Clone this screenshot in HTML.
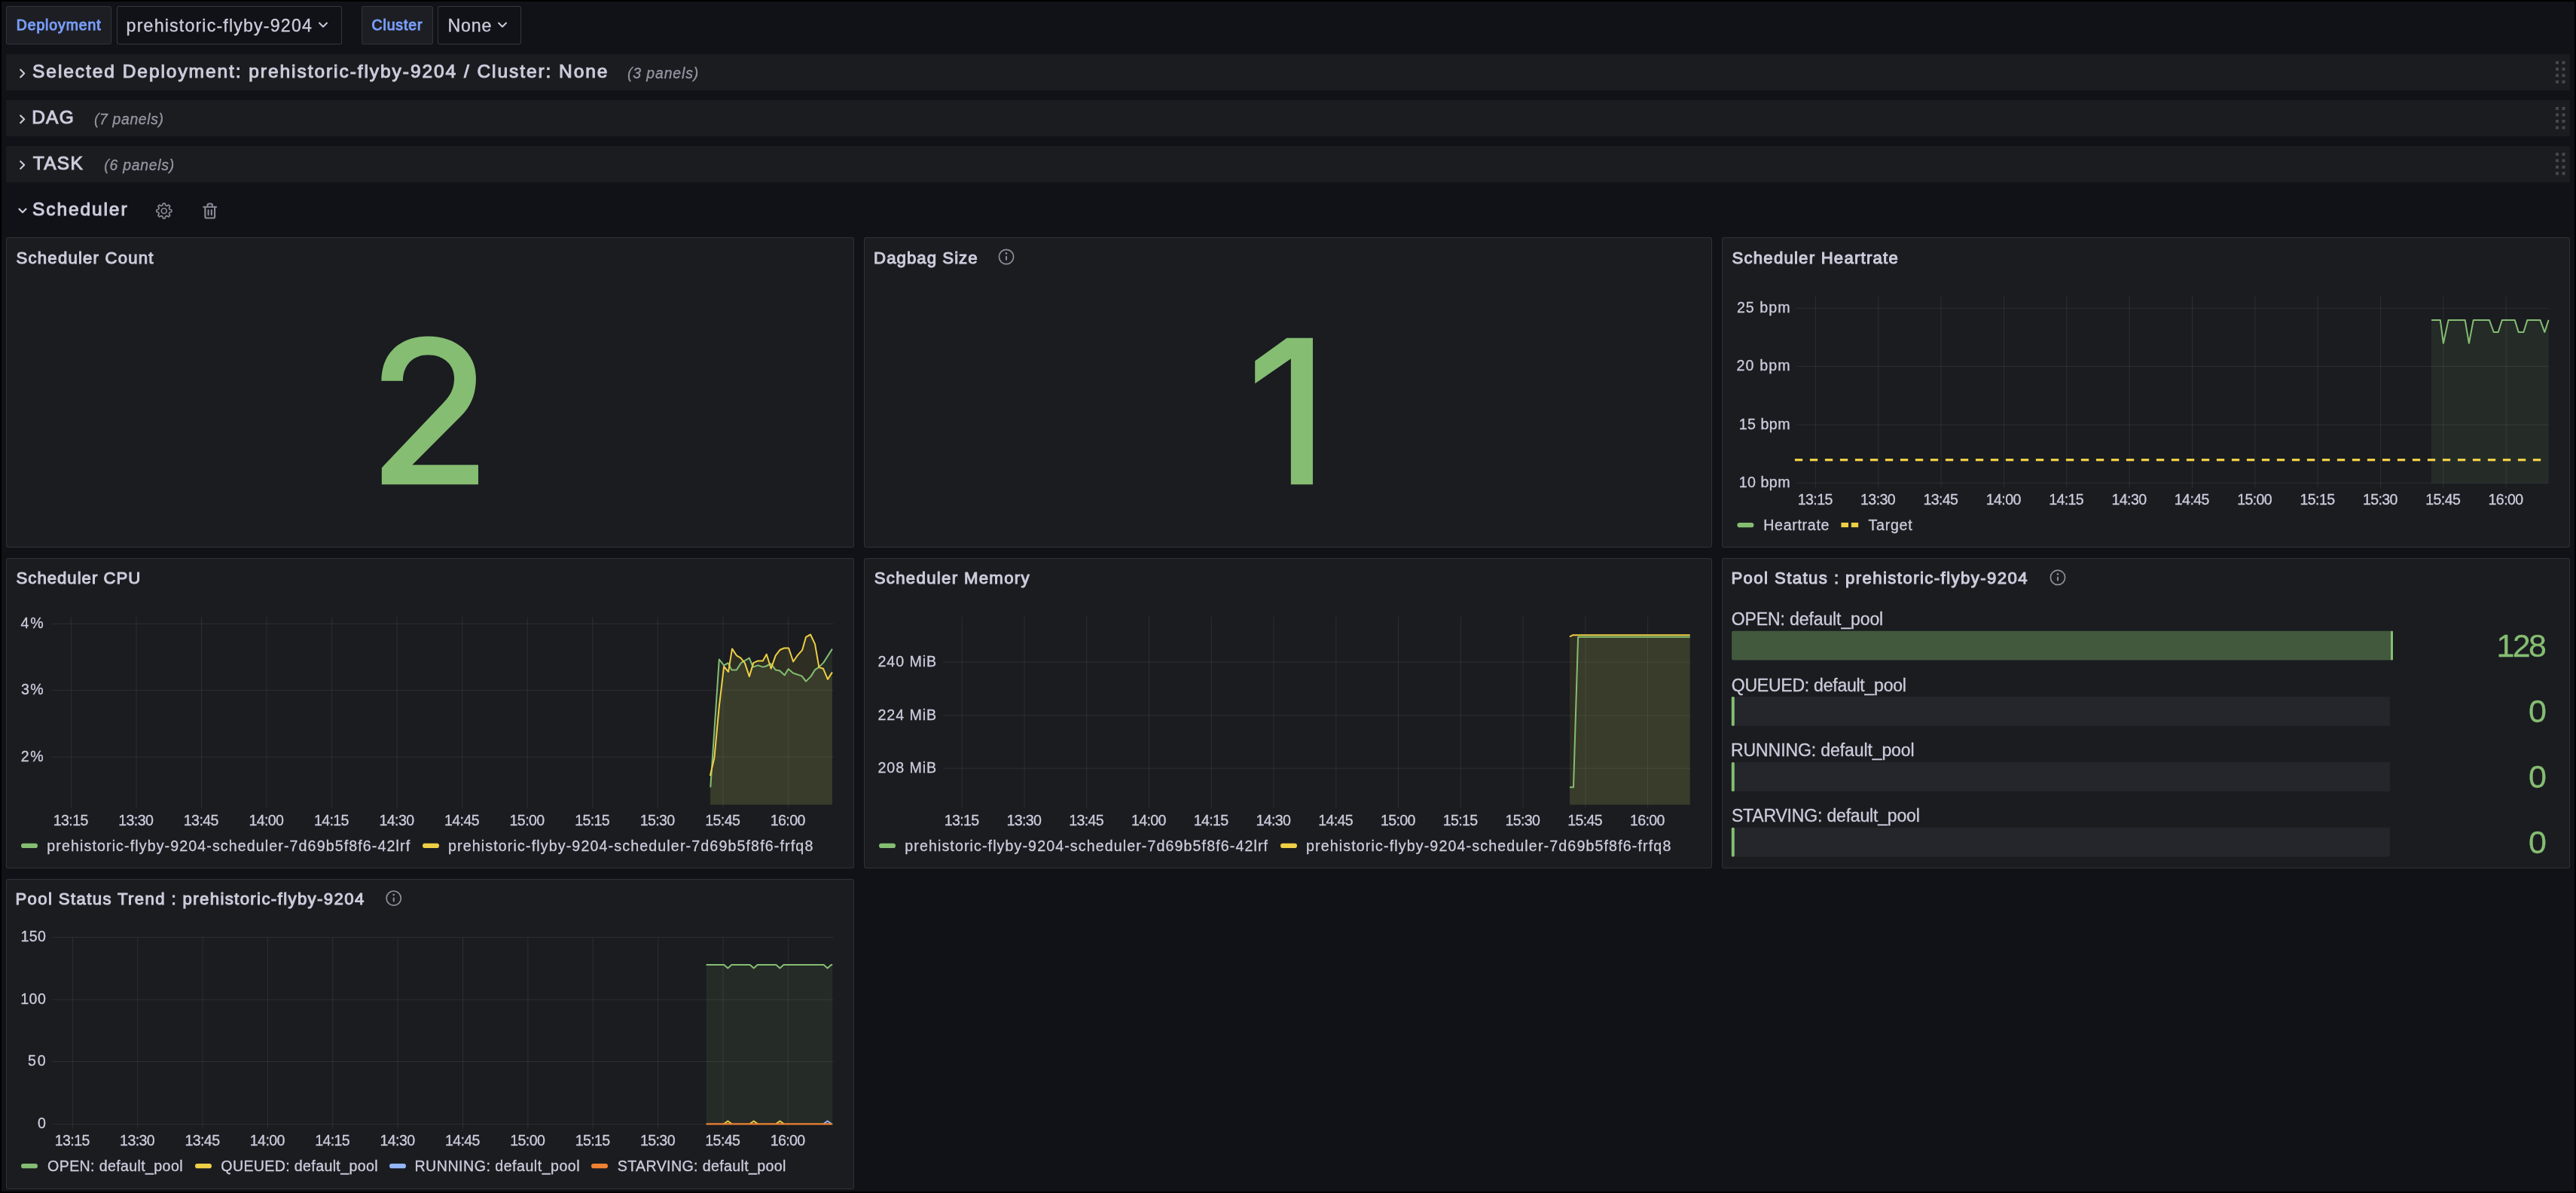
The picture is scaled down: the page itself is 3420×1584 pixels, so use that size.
<!DOCTYPE html>
<html><head><meta charset="utf-8"><title>Scheduler</title>
<style>
html,body{margin:0;padding:0;width:3420px;height:1584px;overflow:hidden;background:#000;}
body{position:relative;font-family:"Liberation Sans",sans-serif;}
.a{position:absolute;}
.t{position:absolute;white-space:pre;}
svg.g{position:absolute;left:0;top:0;}
.tl{position:absolute;left:0;top:0;width:3420px;height:1584px;will-change:transform;}
</style></head><body>
<div class="a" style="left:0.00px;top:0.00px;width:3420.00px;height:1584.00px;background:#000;"></div>
<div class="a" style="left:2.00px;top:2.00px;width:3416.00px;height:1580.00px;background:#111217;"></div>
<div class="a" style="left:8.00px;top:8.00px;width:140.00px;height:51.00px;background:#1d1e23;box-sizing:border-box;border:1px solid rgba(204,204,220,0.12);border-radius:3px;"></div>
<div class="a" style="left:155.00px;top:8.00px;width:299.00px;height:51.00px;background:#111217;box-sizing:border-box;border:1px solid rgba(204,204,220,0.20);border-radius:3px;"></div>
<div class="a" style="left:480.00px;top:8.00px;width:95.00px;height:51.00px;background:#1d1e23;box-sizing:border-box;border:1px solid rgba(204,204,220,0.12);border-radius:3px;"></div>
<div class="a" style="left:581.00px;top:8.00px;width:111.00px;height:51.00px;background:#111217;box-sizing:border-box;border:1px solid rgba(204,204,220,0.20);border-radius:3px;"></div>
<div class="a" style="left:8.00px;top:72.00px;width:3404.00px;height:48.00px;background:#1a1c20;"></div>
<div class="a" style="left:8.00px;top:132.80px;width:3404.00px;height:48.00px;background:#1a1c20;"></div>
<div class="a" style="left:8.00px;top:193.60px;width:3404.00px;height:48.00px;background:#1a1c20;"></div>
<div class="a" style="left:8.00px;top:315.20px;width:1126.00px;height:412.00px;background:#1a1c20;box-sizing:border-box;border:1px solid rgba(204,204,220,0.12);border-radius:3px;"></div>
<div class="a" style="left:1147.00px;top:315.20px;width:1126.00px;height:412.00px;background:#1a1c20;box-sizing:border-box;border:1px solid rgba(204,204,220,0.12);border-radius:3px;"></div>
<div class="a" style="left:2286.00px;top:315.20px;width:1126.00px;height:412.00px;background:#1a1c20;box-sizing:border-box;border:1px solid rgba(204,204,220,0.12);border-radius:3px;"></div>
<div class="a" style="left:8.00px;top:741.00px;width:1126.00px;height:411.50px;background:#1a1c20;box-sizing:border-box;border:1px solid rgba(204,204,220,0.12);border-radius:3px;"></div>
<div class="a" style="left:1147.00px;top:741.00px;width:1126.00px;height:411.50px;background:#1a1c20;box-sizing:border-box;border:1px solid rgba(204,204,220,0.12);border-radius:3px;"></div>
<div class="a" style="left:2286.00px;top:741.00px;width:1126.00px;height:411.50px;background:#1a1c20;box-sizing:border-box;border:1px solid rgba(204,204,220,0.12);border-radius:3px;"></div>
<div class="a" style="left:8.00px;top:1166.90px;width:1126.00px;height:411.80px;background:#1a1c20;box-sizing:border-box;border:1px solid rgba(204,204,220,0.12);border-radius:3px;"></div>
<svg class="g" width="3420" height="1584" viewBox="0 0 3420 1584">
<polyline points="424.00,30.50 429.00,35.50 434.00,30.50" fill="none" stroke="#ccccdc" stroke-width="2" stroke-linejoin="round" stroke-linecap="round"/>
<polyline points="662.00,30.50 667.00,35.50 672.00,30.50" fill="none" stroke="#ccccdc" stroke-width="2" stroke-linejoin="round" stroke-linecap="round"/>
<polyline points="27.20,92.60 32.20,97.50 27.20,102.40" fill="none" stroke="#ccccdc" stroke-width="2.1" stroke-linejoin="round" stroke-linecap="round" stroke-linejoin="round"/>
<rect x="3393.0" y="81.20" width="4" height="4" fill="rgba(204,204,220,0.25)"/>
<rect x="3393.0" y="89.70" width="4" height="4" fill="rgba(204,204,220,0.25)"/>
<rect x="3393.0" y="98.20" width="4" height="4" fill="rgba(204,204,220,0.25)"/>
<rect x="3393.0" y="106.70" width="4" height="4" fill="rgba(204,204,220,0.25)"/>
<rect x="3401.5" y="81.20" width="4" height="4" fill="rgba(204,204,220,0.25)"/>
<rect x="3401.5" y="89.70" width="4" height="4" fill="rgba(204,204,220,0.25)"/>
<rect x="3401.5" y="98.20" width="4" height="4" fill="rgba(204,204,220,0.25)"/>
<rect x="3401.5" y="106.70" width="4" height="4" fill="rgba(204,204,220,0.25)"/>
<polyline points="27.20,153.40 32.20,158.30 27.20,163.20" fill="none" stroke="#ccccdc" stroke-width="2.1" stroke-linejoin="round" stroke-linecap="round" stroke-linejoin="round"/>
<rect x="3393.0" y="142.00" width="4" height="4" fill="rgba(204,204,220,0.25)"/>
<rect x="3393.0" y="150.50" width="4" height="4" fill="rgba(204,204,220,0.25)"/>
<rect x="3393.0" y="159.00" width="4" height="4" fill="rgba(204,204,220,0.25)"/>
<rect x="3393.0" y="167.50" width="4" height="4" fill="rgba(204,204,220,0.25)"/>
<rect x="3401.5" y="142.00" width="4" height="4" fill="rgba(204,204,220,0.25)"/>
<rect x="3401.5" y="150.50" width="4" height="4" fill="rgba(204,204,220,0.25)"/>
<rect x="3401.5" y="159.00" width="4" height="4" fill="rgba(204,204,220,0.25)"/>
<rect x="3401.5" y="167.50" width="4" height="4" fill="rgba(204,204,220,0.25)"/>
<polyline points="27.20,214.20 32.20,219.10 27.20,224.00" fill="none" stroke="#ccccdc" stroke-width="2.1" stroke-linejoin="round" stroke-linecap="round" stroke-linejoin="round"/>
<rect x="3393.0" y="202.80" width="4" height="4" fill="rgba(204,204,220,0.25)"/>
<rect x="3393.0" y="211.30" width="4" height="4" fill="rgba(204,204,220,0.25)"/>
<rect x="3393.0" y="219.80" width="4" height="4" fill="rgba(204,204,220,0.25)"/>
<rect x="3393.0" y="228.30" width="4" height="4" fill="rgba(204,204,220,0.25)"/>
<rect x="3401.5" y="202.80" width="4" height="4" fill="rgba(204,204,220,0.25)"/>
<rect x="3401.5" y="211.30" width="4" height="4" fill="rgba(204,204,220,0.25)"/>
<rect x="3401.5" y="219.80" width="4" height="4" fill="rgba(204,204,220,0.25)"/>
<rect x="3401.5" y="228.30" width="4" height="4" fill="rgba(204,204,220,0.25)"/>
<polyline points="25.50,277.50 30.00,282.00 34.50,277.50" fill="none" stroke="#ccccdc" stroke-width="2.2" stroke-linejoin="round" stroke-linecap="round" stroke-linejoin="round"/>
<circle cx="1336.00" cy="341.00" r="9.6" fill="none" stroke="rgba(204,204,220,0.65)" stroke-width="1.7"/>
<rect x="1335.00" y="339.80" width="2" height="6" rx="1" fill="rgba(204,204,220,0.65)"/>
<circle cx="1336.00" cy="336.40" r="1.3" fill="rgba(204,204,220,0.65)"/>
<circle cx="2732.00" cy="766.80" r="9.6" fill="none" stroke="rgba(204,204,220,0.65)" stroke-width="1.7"/>
<rect x="2731.00" y="765.60" width="2" height="6" rx="1" fill="rgba(204,204,220,0.65)"/>
<circle cx="2732.00" cy="762.20" r="1.3" fill="rgba(204,204,220,0.65)"/>
<circle cx="522.70" cy="1192.60" r="9.6" fill="none" stroke="rgba(204,204,220,0.65)" stroke-width="1.7"/>
<rect x="521.70" y="1191.40" width="2" height="6" rx="1" fill="rgba(204,204,220,0.65)"/>
<circle cx="522.70" cy="1188.00" r="1.3" fill="rgba(204,204,220,0.65)"/>
<path transform="translate(450,400) scale(0.23474)" fill="#85bd72" d="M242,1036 L788,1036 L788,925 L415,925 L690,650 C750,590 775,520 775,435 C775,290 660,198 505,198 C340,198 240,300 240,450 L362,450 C362,360 420,303 503,303 C595,303 652,360 652,435 C652,500 625,540 585,580 L242,942 Z"/>
<path transform="translate(1600,400) scale(0.23474)" fill="#85bd72" d="M282,338 L462,208 L609,208 L609,1036 L485,1036 L485,325 L282,465 Z"/>
<line x1="2385.00" y1="409.30" x2="3384.20" y2="409.30" stroke="rgba(204,204,220,0.10)" stroke-width="1" />
<line x1="2385.00" y1="486.40" x2="3384.20" y2="486.40" stroke="rgba(204,204,220,0.10)" stroke-width="1" />
<line x1="2385.00" y1="564.10" x2="3384.20" y2="564.10" stroke="rgba(204,204,220,0.10)" stroke-width="1" />
<line x1="2385.00" y1="641.40" x2="3384.20" y2="641.40" stroke="rgba(204,204,220,0.10)" stroke-width="1" />
<line x1="2410.40" y1="393.30" x2="2410.40" y2="647.30" stroke="rgba(204,204,220,0.10)" stroke-width="1" />
<line x1="2493.75" y1="393.30" x2="2493.75" y2="647.30" stroke="rgba(204,204,220,0.10)" stroke-width="1" />
<line x1="2577.10" y1="393.30" x2="2577.10" y2="647.30" stroke="rgba(204,204,220,0.10)" stroke-width="1" />
<line x1="2660.45" y1="393.30" x2="2660.45" y2="647.30" stroke="rgba(204,204,220,0.10)" stroke-width="1" />
<line x1="2743.80" y1="393.30" x2="2743.80" y2="647.30" stroke="rgba(204,204,220,0.10)" stroke-width="1" />
<line x1="2827.15" y1="393.30" x2="2827.15" y2="647.30" stroke="rgba(204,204,220,0.10)" stroke-width="1" />
<line x1="2910.50" y1="393.30" x2="2910.50" y2="647.30" stroke="rgba(204,204,220,0.10)" stroke-width="1" />
<line x1="2993.85" y1="393.30" x2="2993.85" y2="647.30" stroke="rgba(204,204,220,0.10)" stroke-width="1" />
<line x1="3077.20" y1="393.30" x2="3077.20" y2="647.30" stroke="rgba(204,204,220,0.10)" stroke-width="1" />
<line x1="3160.55" y1="393.30" x2="3160.55" y2="647.30" stroke="rgba(204,204,220,0.10)" stroke-width="1" />
<line x1="3243.90" y1="393.30" x2="3243.90" y2="647.30" stroke="rgba(204,204,220,0.10)" stroke-width="1" />
<line x1="3327.25" y1="393.30" x2="3327.25" y2="647.30" stroke="rgba(204,204,220,0.10)" stroke-width="1" />
<polygon points="3228.00,424.90 3239.80,424.90 3243.90,455.70 3250.60,424.90 3272.70,424.90 3277.90,455.70 3283.80,424.90 3304.90,424.90 3310.80,441.00 3316.70,441.00 3321.90,424.90 3338.70,424.90 3343.70,441.00 3350.40,441.00 3355.40,424.90 3372.40,424.90 3378.30,441.00 3383.60,424.90 3383.60,641.50 3228.00,641.50" fill="#85bd72" fill-opacity="0.1" stroke="none"/>
<polyline points="3228.00,424.90 3239.80,424.90 3243.90,455.70 3250.60,424.90 3272.70,424.90 3277.90,455.70 3283.80,424.90 3304.90,424.90 3310.80,441.00 3316.70,441.00 3321.90,424.90 3338.70,424.90 3343.70,441.00 3350.40,441.00 3355.40,424.90 3372.40,424.90 3378.30,441.00 3383.60,424.90" fill="none" stroke="#85bd72" stroke-width="2" stroke-linejoin="round" />
<line x1="2382.90" y1="610.60" x2="3373.20" y2="610.60" stroke="#eecf45" stroke-width="3.4" stroke-dasharray="10.3 9.7"/>
<rect x="2306.40" y="694.10" width="22" height="6.2" rx="3.1" fill="#85bd72"/>
<rect x="2444.40" y="693.90" width="9.6" height="6.2" fill="#eecf45"/>
<rect x="2457.80" y="693.90" width="9.4" height="6.2" fill="#eecf45"/>
<line x1="68.20" y1="828.30" x2="1106.80" y2="828.30" stroke="rgba(204,204,220,0.10)" stroke-width="1" />
<line x1="68.20" y1="916.40" x2="1106.80" y2="916.40" stroke="rgba(204,204,220,0.10)" stroke-width="1" />
<line x1="68.20" y1="1005.10" x2="1106.80" y2="1005.10" stroke="rgba(204,204,220,0.10)" stroke-width="1" />
<line x1="94.40" y1="819.30" x2="94.40" y2="1073.10" stroke="rgba(204,204,220,0.10)" stroke-width="1" />
<line x1="180.95" y1="819.30" x2="180.95" y2="1073.10" stroke="rgba(204,204,220,0.10)" stroke-width="1" />
<line x1="267.50" y1="819.30" x2="267.50" y2="1073.10" stroke="rgba(204,204,220,0.10)" stroke-width="1" />
<line x1="354.05" y1="819.30" x2="354.05" y2="1073.10" stroke="rgba(204,204,220,0.10)" stroke-width="1" />
<line x1="440.60" y1="819.30" x2="440.60" y2="1073.10" stroke="rgba(204,204,220,0.10)" stroke-width="1" />
<line x1="527.15" y1="819.30" x2="527.15" y2="1073.10" stroke="rgba(204,204,220,0.10)" stroke-width="1" />
<line x1="613.70" y1="819.30" x2="613.70" y2="1073.10" stroke="rgba(204,204,220,0.10)" stroke-width="1" />
<line x1="700.25" y1="819.30" x2="700.25" y2="1073.10" stroke="rgba(204,204,220,0.10)" stroke-width="1" />
<line x1="786.80" y1="819.30" x2="786.80" y2="1073.10" stroke="rgba(204,204,220,0.10)" stroke-width="1" />
<line x1="873.35" y1="819.30" x2="873.35" y2="1073.10" stroke="rgba(204,204,220,0.10)" stroke-width="1" />
<line x1="959.90" y1="819.30" x2="959.90" y2="1073.10" stroke="rgba(204,204,220,0.10)" stroke-width="1" />
<line x1="1046.45" y1="819.30" x2="1046.45" y2="1073.10" stroke="rgba(204,204,220,0.10)" stroke-width="1" />
<polygon points="943.30,1045.20 954.80,875.50 961.10,883.40 966.50,880.30 971.40,889.40 977.90,889.40 983.90,880.10 994.80,873.60 999.70,885.60 1006.30,883.40 1012.80,885.60 1017.20,884.50 1023.20,881.20 1029.70,889.40 1035.10,890.50 1041.70,896.50 1046.60,888.30 1053.10,893.70 1064.60,897.60 1070.00,904.60 1076.50,898.10 1082.00,889.40 1086.90,886.10 1093.40,879.60 1104.90,861.60 1104.90,1068.50 943.30,1068.50" fill="#85bd72" fill-opacity="0.1" stroke="none"/>
<polygon points="942.80,1030.10 948.40,1006.20 954.60,939.60 961.10,885.00 967.00,892.10 972.00,861.40 977.90,870.30 983.40,873.60 988.80,880.10 994.80,898.10 1000.30,880.10 1006.30,877.40 1012.80,877.40 1017.70,868.70 1023.70,887.70 1029.70,870.30 1035.70,862.70 1041.10,860.50 1047.10,860.50 1053.10,878.50 1059.10,869.80 1065.10,863.20 1070.00,845.80 1076.00,842.50 1082.00,855.10 1087.40,886.10 1092.90,887.70 1098.90,901.90 1104.90,892.60 1104.90,1068.50 942.80,1068.50" fill="#eecf45" fill-opacity="0.1" stroke="none"/>
<polyline points="943.30,1045.20 954.80,875.50 961.10,883.40 966.50,880.30 971.40,889.40 977.90,889.40 983.90,880.10 994.80,873.60 999.70,885.60 1006.30,883.40 1012.80,885.60 1017.20,884.50 1023.20,881.20 1029.70,889.40 1035.10,890.50 1041.70,896.50 1046.60,888.30 1053.10,893.70 1064.60,897.60 1070.00,904.60 1076.50,898.10 1082.00,889.40 1086.90,886.10 1093.40,879.60 1104.90,861.60" fill="none" stroke="#85bd72" stroke-width="2" stroke-linejoin="round" />
<polyline points="942.80,1030.10 948.40,1006.20 954.60,939.60 961.10,885.00 967.00,892.10 972.00,861.40 977.90,870.30 983.40,873.60 988.80,880.10 994.80,898.10 1000.30,880.10 1006.30,877.40 1012.80,877.40 1017.70,868.70 1023.70,887.70 1029.70,870.30 1035.70,862.70 1041.10,860.50 1047.10,860.50 1053.10,878.50 1059.10,869.80 1065.10,863.20 1070.00,845.80 1076.00,842.50 1082.00,855.10 1087.40,886.10 1092.90,887.70 1098.90,901.90 1104.90,892.60" fill="none" stroke="#eecf45" stroke-width="2" stroke-linejoin="round" />
<rect x="28.00" y="1119.80" width="22" height="6.2" rx="3.1" fill="#85bd72"/>
<rect x="561.00" y="1119.80" width="22" height="6.2" rx="3.1" fill="#eecf45"/>
<line x1="1252.10" y1="879.10" x2="2244.20" y2="879.10" stroke="rgba(204,204,220,0.10)" stroke-width="1" />
<line x1="1252.10" y1="950.00" x2="2244.20" y2="950.00" stroke="rgba(204,204,220,0.10)" stroke-width="1" />
<line x1="1252.10" y1="1020.20" x2="2244.20" y2="1020.20" stroke="rgba(204,204,220,0.10)" stroke-width="1" />
<line x1="1277.30" y1="819.00" x2="1277.30" y2="1073.10" stroke="rgba(204,204,220,0.10)" stroke-width="1" />
<line x1="1360.05" y1="819.00" x2="1360.05" y2="1073.10" stroke="rgba(204,204,220,0.10)" stroke-width="1" />
<line x1="1442.80" y1="819.00" x2="1442.80" y2="1073.10" stroke="rgba(204,204,220,0.10)" stroke-width="1" />
<line x1="1525.55" y1="819.00" x2="1525.55" y2="1073.10" stroke="rgba(204,204,220,0.10)" stroke-width="1" />
<line x1="1608.30" y1="819.00" x2="1608.30" y2="1073.10" stroke="rgba(204,204,220,0.10)" stroke-width="1" />
<line x1="1691.05" y1="819.00" x2="1691.05" y2="1073.10" stroke="rgba(204,204,220,0.10)" stroke-width="1" />
<line x1="1773.80" y1="819.00" x2="1773.80" y2="1073.10" stroke="rgba(204,204,220,0.10)" stroke-width="1" />
<line x1="1856.55" y1="819.00" x2="1856.55" y2="1073.10" stroke="rgba(204,204,220,0.10)" stroke-width="1" />
<line x1="1939.30" y1="819.00" x2="1939.30" y2="1073.10" stroke="rgba(204,204,220,0.10)" stroke-width="1" />
<line x1="2022.05" y1="819.00" x2="2022.05" y2="1073.10" stroke="rgba(204,204,220,0.10)" stroke-width="1" />
<line x1="2104.80" y1="819.00" x2="2104.80" y2="1073.10" stroke="rgba(204,204,220,0.10)" stroke-width="1" />
<line x1="2187.55" y1="819.00" x2="2187.55" y2="1073.10" stroke="rgba(204,204,220,0.10)" stroke-width="1" />
<polygon points="2084.00,1045.20 2089.00,1045.20 2095.10,845.80 2243.70,845.80 2243.70,1068.50 2084.00,1068.50" fill="#85bd72" fill-opacity="0.1" stroke="none"/>
<polygon points="2084.00,845.30 2088.30,843.20 2243.70,843.20 2243.70,1068.50 2084.00,1068.50" fill="#eecf45" fill-opacity="0.1" stroke="none"/>
<polyline points="2084.00,1045.20 2089.00,1045.20 2095.10,845.80 2243.70,845.80" fill="none" stroke="#85bd72" stroke-width="2" stroke-linejoin="round" />
<polyline points="2084.00,845.30 2088.30,843.20 2243.70,843.20" fill="none" stroke="#eecf45" stroke-width="2" stroke-linejoin="round" />
<rect x="1167.00" y="1119.80" width="22" height="6.2" rx="3.1" fill="#85bd72"/>
<rect x="1700.00" y="1119.80" width="22" height="6.2" rx="3.1" fill="#eecf45"/>
<line x1="69.90" y1="1244.60" x2="1106.60" y2="1244.60" stroke="rgba(204,204,220,0.10)" stroke-width="1" />
<line x1="69.90" y1="1327.40" x2="1106.60" y2="1327.40" stroke="rgba(204,204,220,0.10)" stroke-width="1" />
<line x1="69.90" y1="1409.50" x2="1106.60" y2="1409.50" stroke="rgba(204,204,220,0.10)" stroke-width="1" />
<line x1="69.90" y1="1492.60" x2="1106.60" y2="1492.60" stroke="rgba(204,204,220,0.10)" stroke-width="1" />
<line x1="96.40" y1="1244.60" x2="96.40" y2="1498.50" stroke="rgba(204,204,220,0.10)" stroke-width="1" />
<line x1="182.76" y1="1244.60" x2="182.76" y2="1498.50" stroke="rgba(204,204,220,0.10)" stroke-width="1" />
<line x1="269.12" y1="1244.60" x2="269.12" y2="1498.50" stroke="rgba(204,204,220,0.10)" stroke-width="1" />
<line x1="355.48" y1="1244.60" x2="355.48" y2="1498.50" stroke="rgba(204,204,220,0.10)" stroke-width="1" />
<line x1="441.84" y1="1244.60" x2="441.84" y2="1498.50" stroke="rgba(204,204,220,0.10)" stroke-width="1" />
<line x1="528.20" y1="1244.60" x2="528.20" y2="1498.50" stroke="rgba(204,204,220,0.10)" stroke-width="1" />
<line x1="614.56" y1="1244.60" x2="614.56" y2="1498.50" stroke="rgba(204,204,220,0.10)" stroke-width="1" />
<line x1="700.92" y1="1244.60" x2="700.92" y2="1498.50" stroke="rgba(204,204,220,0.10)" stroke-width="1" />
<line x1="787.28" y1="1244.60" x2="787.28" y2="1498.50" stroke="rgba(204,204,220,0.10)" stroke-width="1" />
<line x1="873.64" y1="1244.60" x2="873.64" y2="1498.50" stroke="rgba(204,204,220,0.10)" stroke-width="1" />
<line x1="960.00" y1="1244.60" x2="960.00" y2="1498.50" stroke="rgba(204,204,220,0.10)" stroke-width="1" />
<line x1="1046.36" y1="1244.60" x2="1046.36" y2="1498.50" stroke="rgba(204,204,220,0.10)" stroke-width="1" />
<polygon points="937.60,1281.00 961.30,1281.00 966.30,1285.50 971.30,1281.00 995.70,1281.00 1000.70,1285.50 1005.70,1281.00 1030.40,1281.00 1035.40,1285.50 1040.40,1281.00 1093.60,1281.00 1098.60,1285.50 1103.60,1281.00 1105.20,1281.00 1105.20,1492.60 937.60,1492.60" fill="#85bd72" fill-opacity="0.1" stroke="none"/>
<polyline points="937.60,1281.00 961.30,1281.00 966.30,1285.50 971.30,1281.00 995.70,1281.00 1000.70,1285.50 1005.70,1281.00 1030.40,1281.00 1035.40,1285.50 1040.40,1281.00 1093.60,1281.00 1098.60,1285.50 1103.60,1281.00 1105.20,1281.00" fill="none" stroke="#85bd72" stroke-width="2" stroke-linejoin="round" />
<polyline points="961.30,1492.00 966.30,1488.50 971.30,1492.00" fill="none" stroke="#eecf45" stroke-width="2" stroke-linejoin="round" />
<polyline points="995.70,1492.00 1000.70,1488.50 1005.70,1492.00" fill="none" stroke="#eecf45" stroke-width="2" stroke-linejoin="round" />
<polyline points="1030.40,1492.00 1035.40,1488.50 1040.40,1492.00" fill="none" stroke="#eecf45" stroke-width="2" stroke-linejoin="round" />
<polyline points="1093.60,1492.00 1098.60,1488.50 1103.60,1492.00" fill="none" stroke="#94b7f9" stroke-width="2" stroke-linejoin="round" />
<line x1="937.60" y1="1492.40" x2="1105.20" y2="1492.40" stroke="#ee8232" stroke-width="2.2" />
<rect x="28.00" y="1545.10" width="22" height="6.2" rx="3.1" fill="#85bd72"/>
<rect x="259.00" y="1545.10" width="22" height="6.2" rx="3.1" fill="#eecf45"/>
<rect x="517.00" y="1545.10" width="22" height="6.2" rx="3.1" fill="#94b7f9"/>
<rect x="785.00" y="1545.10" width="22" height="6.2" rx="3.1" fill="#ee8232"/>
<rect x="2299.1" y="837.8" width="877.8" height="38.8" rx="2" fill="#85bd72" fill-opacity="0.38"/>
<rect x="3174.0" y="837.8" width="3" height="38.8" rx="1" fill="#85bd72"/>
<rect x="2302.8" y="925.0" width="870.2" height="38.8" rx="2" fill="rgba(204,204,220,0.06)"/>
<rect x="2298.8" y="925.0" width="4" height="38.8" rx="1.5" fill="#85bd72"/>
<rect x="2302.8" y="1011.9" width="870.2" height="38.8" rx="2" fill="rgba(204,204,220,0.06)"/>
<rect x="2298.8" y="1011.9" width="4" height="38.8" rx="1.5" fill="#85bd72"/>
<rect x="2302.8" y="1098.8" width="870.2" height="38.8" rx="2" fill="rgba(204,204,220,0.06)"/>
<rect x="2298.8" y="1098.8" width="4" height="38.8" rx="1.5" fill="#85bd72"/>
<path d="M225.13,277.99 L227.72,278.75 L227.72,281.25 L225.13,282.01 L224.40,283.77 L225.70,286.13 L223.93,287.90 L221.57,286.60 L219.81,287.33 L219.05,289.92 L216.55,289.92 L215.79,287.33 L214.03,286.60 L211.67,287.90 L209.90,286.13 L211.20,283.77 L210.47,282.01 L207.88,281.25 L207.88,278.75 L210.47,277.99 L211.20,276.23 L209.90,273.87 L211.67,272.10 L214.03,273.40 L215.79,272.67 L216.55,270.08 L219.05,270.08 L219.81,272.67 L221.57,273.40 L223.93,272.10 L225.70,273.87 L224.40,276.23 Z" fill="none" stroke="rgba(204,204,220,0.65)" stroke-width="1.7" stroke-linejoin="round"/>
<circle cx="217.8" cy="280.0" r="3.5" fill="none" stroke="rgba(204,204,220,0.65)" stroke-width="1.7"/>
<g transform="translate(266.0,267.3) scale(1.06)" fill="rgba(204,204,220,0.65)"><path d="M10,18a1,1,0,0,0,1-1V11a1,1,0,0,0-2,0v6A1,1,0,0,0,10,18ZM20,6H16V5a3,3,0,0,0-3-3H11A3,3,0,0,0,8,5V6H4A1,1,0,0,0,4,8H5V19a3,3,0,0,0,3,3h8a3,3,0,0,0,3-3V8h1a1,1,0,0,0,0-2ZM10,5a1,1,0,0,1,1-1h2a1,1,0,0,1,1,1V6H10Zm7,14a1,1,0,0,1-1,1H8a1,1,0,0,1-1-1V8H17Zm-3-1a1,1,0,0,0,1-1V11a1,1,0,0,0-2,0v6A1,1,0,0,0,14,18Z"/></g>
</svg>
<div class="tl">
<div class="t" style="left:21.72px;top:23.60px;font-size:19.4px;line-height:19.4px;color:#799ef8;-webkit-text-stroke:1.0px #799ef8;letter-spacing:0.939px;">Deployment</div>
<div class="t" style="left:167.62px;top:22.90px;font-size:23.2px;line-height:23.2px;color:#ccccdc;-webkit-text-stroke:0.3px #ccccdc;letter-spacing:1.170px;">prehistoric-flyby-9204</div>
<div class="t" style="left:493.55px;top:23.60px;font-size:19.4px;line-height:19.4px;color:#799ef8;-webkit-text-stroke:1.0px #799ef8;letter-spacing:0.900px;">Cluster</div>
<div class="t" style="left:594.45px;top:22.90px;font-size:23.2px;line-height:23.2px;color:#ccccdc;-webkit-text-stroke:0.3px #ccccdc;letter-spacing:0.833px;">None</div>
<div class="t" style="left:43.08px;top:83.35px;font-size:24.5px;line-height:24.5px;color:#ccccdc;-webkit-text-stroke:1.0px #ccccdc;letter-spacing:1.939px;">Selected Deployment: prehistoric-flyby-9204 / Cluster: None</div>
<div class="t" style="left:832.93px;top:88.00px;font-size:19.4px;line-height:19.4px;color:rgba(204,204,220,0.65);-webkit-text-stroke:0.3px rgba(204,204,220,0.65);font-style:italic;letter-spacing:0.908px;">(3 panels)</div>
<div class="t" style="left:42.20px;top:144.15px;font-size:24.5px;line-height:24.5px;color:#ccccdc;-webkit-text-stroke:1.0px #ccccdc;letter-spacing:1.225px;">DAG</div>
<div class="t" style="left:124.93px;top:148.80px;font-size:19.4px;line-height:19.4px;color:rgba(204,204,220,0.65);-webkit-text-stroke:0.3px rgba(204,204,220,0.65);font-style:italic;letter-spacing:0.653px;">(7 panels)</div>
<div class="t" style="left:43.70px;top:204.95px;font-size:24.5px;line-height:24.5px;color:#ccccdc;-webkit-text-stroke:1.0px #ccccdc;letter-spacing:1.342px;">TASK</div>
<div class="t" style="left:138.32px;top:209.60px;font-size:19.4px;line-height:19.4px;color:rgba(204,204,220,0.65);-webkit-text-stroke:0.3px rgba(204,204,220,0.65);font-style:italic;letter-spacing:0.731px;">(6 panels)</div>
<div class="t" style="left:43.08px;top:265.65px;font-size:24.5px;line-height:24.5px;color:#ccccdc;-webkit-text-stroke:1.0px #ccccdc;letter-spacing:1.894px;">Scheduler</div>
<div class="t" style="left:21.58px;top:331.70px;font-size:22.2px;line-height:22.2px;color:#ccccdc;-webkit-text-stroke:1.0px #ccccdc;letter-spacing:1.184px;">Scheduler Count</div>
<div class="t" style="left:1160.10px;top:331.70px;font-size:22.2px;line-height:22.2px;color:#ccccdc;-webkit-text-stroke:1.0px #ccccdc;letter-spacing:1.045px;">Dagbag Size</div>
<div class="t" style="left:2299.47px;top:331.70px;font-size:22.2px;line-height:22.2px;color:#ccccdc;-webkit-text-stroke:1.0px #ccccdc;letter-spacing:1.210px;">Scheduler Heartrate</div>
<div class="t" style="left:21.58px;top:757.30px;font-size:22.2px;line-height:22.2px;color:#ccccdc;-webkit-text-stroke:1.0px #ccccdc;letter-spacing:0.977px;">Scheduler CPU</div>
<div class="t" style="left:1160.67px;top:757.30px;font-size:22.2px;line-height:22.2px;color:#ccccdc;-webkit-text-stroke:1.0px #ccccdc;letter-spacing:1.317px;">Scheduler Memory</div>
<div class="t" style="left:2298.40px;top:757.30px;font-size:22.2px;line-height:22.2px;color:#ccccdc;-webkit-text-stroke:1.0px #ccccdc;letter-spacing:1.404px;">Pool Status : prehistoric-flyby-9204</div>
<div class="t" style="left:20.40px;top:1182.70px;font-size:22.2px;line-height:22.2px;color:#ccccdc;-webkit-text-stroke:1.0px #ccccdc;letter-spacing:1.363px;">Pool Status Trend : prehistoric-flyby-9204</div>
<div class="t" style="left:2386.75px;top:653.60px;font-size:19.6px;line-height:19.6px;color:#ccccdc;-webkit-text-stroke:0.3px #ccccdc;letter-spacing:-0.619px;">13:15</div>
<div class="t" style="left:2470.10px;top:653.60px;font-size:19.6px;line-height:19.6px;color:#ccccdc;-webkit-text-stroke:0.3px #ccccdc;letter-spacing:-0.619px;">13:30</div>
<div class="t" style="left:2553.45px;top:653.60px;font-size:19.6px;line-height:19.6px;color:#ccccdc;-webkit-text-stroke:0.3px #ccccdc;letter-spacing:-0.619px;">13:45</div>
<div class="t" style="left:2636.80px;top:653.60px;font-size:19.6px;line-height:19.6px;color:#ccccdc;-webkit-text-stroke:0.3px #ccccdc;letter-spacing:-0.619px;">14:00</div>
<div class="t" style="left:2720.15px;top:653.60px;font-size:19.6px;line-height:19.6px;color:#ccccdc;-webkit-text-stroke:0.3px #ccccdc;letter-spacing:-0.619px;">14:15</div>
<div class="t" style="left:2803.50px;top:653.60px;font-size:19.6px;line-height:19.6px;color:#ccccdc;-webkit-text-stroke:0.3px #ccccdc;letter-spacing:-0.619px;">14:30</div>
<div class="t" style="left:2886.85px;top:653.60px;font-size:19.6px;line-height:19.6px;color:#ccccdc;-webkit-text-stroke:0.3px #ccccdc;letter-spacing:-0.619px;">14:45</div>
<div class="t" style="left:2970.20px;top:653.60px;font-size:19.6px;line-height:19.6px;color:#ccccdc;-webkit-text-stroke:0.3px #ccccdc;letter-spacing:-0.619px;">15:00</div>
<div class="t" style="left:3053.55px;top:653.60px;font-size:19.6px;line-height:19.6px;color:#ccccdc;-webkit-text-stroke:0.3px #ccccdc;letter-spacing:-0.619px;">15:15</div>
<div class="t" style="left:3136.90px;top:653.60px;font-size:19.6px;line-height:19.6px;color:#ccccdc;-webkit-text-stroke:0.3px #ccccdc;letter-spacing:-0.619px;">15:30</div>
<div class="t" style="left:3220.25px;top:653.60px;font-size:19.6px;line-height:19.6px;color:#ccccdc;-webkit-text-stroke:0.3px #ccccdc;letter-spacing:-0.619px;">15:45</div>
<div class="t" style="left:3303.60px;top:653.60px;font-size:19.6px;line-height:19.6px;color:#ccccdc;-webkit-text-stroke:0.3px #ccccdc;letter-spacing:-0.619px;">16:00</div>
<div class="t" style="left:2305.90px;top:399.10px;font-size:19.6px;line-height:19.6px;color:#ccccdc;-webkit-text-stroke:0.3px #ccccdc;letter-spacing:1.050px;">25 bpm</div>
<div class="t" style="left:2305.50px;top:476.20px;font-size:19.6px;line-height:19.6px;color:#ccccdc;-webkit-text-stroke:0.3px #ccccdc;letter-spacing:1.130px;">20 bpm</div>
<div class="t" style="left:2308.70px;top:553.90px;font-size:19.6px;line-height:19.6px;color:#ccccdc;-webkit-text-stroke:0.3px #ccccdc;letter-spacing:0.490px;">15 bpm</div>
<div class="t" style="left:2308.70px;top:631.20px;font-size:19.6px;line-height:19.6px;color:#ccccdc;-webkit-text-stroke:0.3px #ccccdc;letter-spacing:0.490px;">10 bpm</div>
<div class="t" style="left:2341.18px;top:687.60px;font-size:19.6px;line-height:19.6px;color:#ccccdc;-webkit-text-stroke:0.3px #ccccdc;letter-spacing:0.706px;">Heartrate</div>
<div class="t" style="left:2480.53px;top:687.60px;font-size:19.6px;line-height:19.6px;color:#ccccdc;-webkit-text-stroke:0.3px #ccccdc;letter-spacing:0.735px;">Target</div>
<div class="t" style="left:70.75px;top:1079.50px;font-size:19.6px;line-height:19.6px;color:#ccccdc;-webkit-text-stroke:0.3px #ccccdc;letter-spacing:-0.619px;">13:15</div>
<div class="t" style="left:157.30px;top:1079.50px;font-size:19.6px;line-height:19.6px;color:#ccccdc;-webkit-text-stroke:0.3px #ccccdc;letter-spacing:-0.619px;">13:30</div>
<div class="t" style="left:243.85px;top:1079.50px;font-size:19.6px;line-height:19.6px;color:#ccccdc;-webkit-text-stroke:0.3px #ccccdc;letter-spacing:-0.619px;">13:45</div>
<div class="t" style="left:330.40px;top:1079.50px;font-size:19.6px;line-height:19.6px;color:#ccccdc;-webkit-text-stroke:0.3px #ccccdc;letter-spacing:-0.619px;">14:00</div>
<div class="t" style="left:416.95px;top:1079.50px;font-size:19.6px;line-height:19.6px;color:#ccccdc;-webkit-text-stroke:0.3px #ccccdc;letter-spacing:-0.619px;">14:15</div>
<div class="t" style="left:503.50px;top:1079.50px;font-size:19.6px;line-height:19.6px;color:#ccccdc;-webkit-text-stroke:0.3px #ccccdc;letter-spacing:-0.619px;">14:30</div>
<div class="t" style="left:590.05px;top:1079.50px;font-size:19.6px;line-height:19.6px;color:#ccccdc;-webkit-text-stroke:0.3px #ccccdc;letter-spacing:-0.619px;">14:45</div>
<div class="t" style="left:676.60px;top:1079.50px;font-size:19.6px;line-height:19.6px;color:#ccccdc;-webkit-text-stroke:0.3px #ccccdc;letter-spacing:-0.619px;">15:00</div>
<div class="t" style="left:763.15px;top:1079.50px;font-size:19.6px;line-height:19.6px;color:#ccccdc;-webkit-text-stroke:0.3px #ccccdc;letter-spacing:-0.619px;">15:15</div>
<div class="t" style="left:849.70px;top:1079.50px;font-size:19.6px;line-height:19.6px;color:#ccccdc;-webkit-text-stroke:0.3px #ccccdc;letter-spacing:-0.619px;">15:30</div>
<div class="t" style="left:936.25px;top:1079.50px;font-size:19.6px;line-height:19.6px;color:#ccccdc;-webkit-text-stroke:0.3px #ccccdc;letter-spacing:-0.619px;">15:45</div>
<div class="t" style="left:1022.80px;top:1079.50px;font-size:19.6px;line-height:19.6px;color:#ccccdc;-webkit-text-stroke:0.3px #ccccdc;letter-spacing:-0.619px;">16:00</div>
<div class="t" style="left:27.50px;top:818.10px;font-size:19.6px;line-height:19.6px;color:#ccccdc;-webkit-text-stroke:0.3px #ccccdc;letter-spacing:1.850px;">4%</div>
<div class="t" style="left:27.95px;top:906.20px;font-size:19.6px;line-height:19.6px;color:#ccccdc;-webkit-text-stroke:0.3px #ccccdc;letter-spacing:1.400px;">3%</div>
<div class="t" style="left:27.70px;top:994.90px;font-size:19.6px;line-height:19.6px;color:#ccccdc;-webkit-text-stroke:0.3px #ccccdc;letter-spacing:1.650px;">2%</div>
<div class="t" style="left:62.35px;top:1113.90px;font-size:19.6px;line-height:19.6px;color:#ccccdc;-webkit-text-stroke:0.3px #ccccdc;letter-spacing:1.119px;">prehistoric-flyby-9204-scheduler-7d69b5f8f6-42lrf</div>
<div class="t" style="left:594.95px;top:1113.90px;font-size:19.6px;line-height:19.6px;color:#ccccdc;-webkit-text-stroke:0.3px #ccccdc;letter-spacing:1.151px;">prehistoric-flyby-9204-scheduler-7d69b5f8f6-frfq8</div>
<div class="t" style="left:1253.65px;top:1079.50px;font-size:19.6px;line-height:19.6px;color:#ccccdc;-webkit-text-stroke:0.3px #ccccdc;letter-spacing:-0.619px;">13:15</div>
<div class="t" style="left:1336.40px;top:1079.50px;font-size:19.6px;line-height:19.6px;color:#ccccdc;-webkit-text-stroke:0.3px #ccccdc;letter-spacing:-0.619px;">13:30</div>
<div class="t" style="left:1419.15px;top:1079.50px;font-size:19.6px;line-height:19.6px;color:#ccccdc;-webkit-text-stroke:0.3px #ccccdc;letter-spacing:-0.619px;">13:45</div>
<div class="t" style="left:1501.90px;top:1079.50px;font-size:19.6px;line-height:19.6px;color:#ccccdc;-webkit-text-stroke:0.3px #ccccdc;letter-spacing:-0.619px;">14:00</div>
<div class="t" style="left:1584.65px;top:1079.50px;font-size:19.6px;line-height:19.6px;color:#ccccdc;-webkit-text-stroke:0.3px #ccccdc;letter-spacing:-0.619px;">14:15</div>
<div class="t" style="left:1667.40px;top:1079.50px;font-size:19.6px;line-height:19.6px;color:#ccccdc;-webkit-text-stroke:0.3px #ccccdc;letter-spacing:-0.619px;">14:30</div>
<div class="t" style="left:1750.15px;top:1079.50px;font-size:19.6px;line-height:19.6px;color:#ccccdc;-webkit-text-stroke:0.3px #ccccdc;letter-spacing:-0.619px;">14:45</div>
<div class="t" style="left:1832.90px;top:1079.50px;font-size:19.6px;line-height:19.6px;color:#ccccdc;-webkit-text-stroke:0.3px #ccccdc;letter-spacing:-0.619px;">15:00</div>
<div class="t" style="left:1915.65px;top:1079.50px;font-size:19.6px;line-height:19.6px;color:#ccccdc;-webkit-text-stroke:0.3px #ccccdc;letter-spacing:-0.619px;">15:15</div>
<div class="t" style="left:1998.40px;top:1079.50px;font-size:19.6px;line-height:19.6px;color:#ccccdc;-webkit-text-stroke:0.3px #ccccdc;letter-spacing:-0.619px;">15:30</div>
<div class="t" style="left:2081.15px;top:1079.50px;font-size:19.6px;line-height:19.6px;color:#ccccdc;-webkit-text-stroke:0.3px #ccccdc;letter-spacing:-0.619px;">15:45</div>
<div class="t" style="left:2163.90px;top:1079.50px;font-size:19.6px;line-height:19.6px;color:#ccccdc;-webkit-text-stroke:0.3px #ccccdc;letter-spacing:-0.619px;">16:00</div>
<div class="t" style="left:1165.50px;top:868.90px;font-size:19.6px;line-height:19.6px;color:#ccccdc;-webkit-text-stroke:0.3px #ccccdc;letter-spacing:0.967px;">240 MiB</div>
<div class="t" style="left:1165.50px;top:939.80px;font-size:19.6px;line-height:19.6px;color:#ccccdc;-webkit-text-stroke:0.3px #ccccdc;letter-spacing:0.967px;">224 MiB</div>
<div class="t" style="left:1165.50px;top:1010.00px;font-size:19.6px;line-height:19.6px;color:#ccccdc;-webkit-text-stroke:0.3px #ccccdc;letter-spacing:0.967px;">208 MiB</div>
<div class="t" style="left:1201.25px;top:1113.90px;font-size:19.6px;line-height:19.6px;color:#ccccdc;-webkit-text-stroke:0.3px #ccccdc;letter-spacing:1.119px;">prehistoric-flyby-9204-scheduler-7d69b5f8f6-42lrf</div>
<div class="t" style="left:1733.95px;top:1113.90px;font-size:19.6px;line-height:19.6px;color:#ccccdc;-webkit-text-stroke:0.3px #ccccdc;letter-spacing:1.151px;">prehistoric-flyby-9204-scheduler-7d69b5f8f6-frfq8</div>
<div class="t" style="left:72.75px;top:1505.40px;font-size:19.6px;line-height:19.6px;color:#ccccdc;-webkit-text-stroke:0.3px #ccccdc;letter-spacing:-0.619px;">13:15</div>
<div class="t" style="left:159.11px;top:1505.40px;font-size:19.6px;line-height:19.6px;color:#ccccdc;-webkit-text-stroke:0.3px #ccccdc;letter-spacing:-0.619px;">13:30</div>
<div class="t" style="left:245.47px;top:1505.40px;font-size:19.6px;line-height:19.6px;color:#ccccdc;-webkit-text-stroke:0.3px #ccccdc;letter-spacing:-0.619px;">13:45</div>
<div class="t" style="left:331.83px;top:1505.40px;font-size:19.6px;line-height:19.6px;color:#ccccdc;-webkit-text-stroke:0.3px #ccccdc;letter-spacing:-0.619px;">14:00</div>
<div class="t" style="left:418.19px;top:1505.40px;font-size:19.6px;line-height:19.6px;color:#ccccdc;-webkit-text-stroke:0.3px #ccccdc;letter-spacing:-0.619px;">14:15</div>
<div class="t" style="left:504.55px;top:1505.40px;font-size:19.6px;line-height:19.6px;color:#ccccdc;-webkit-text-stroke:0.3px #ccccdc;letter-spacing:-0.619px;">14:30</div>
<div class="t" style="left:590.91px;top:1505.40px;font-size:19.6px;line-height:19.6px;color:#ccccdc;-webkit-text-stroke:0.3px #ccccdc;letter-spacing:-0.619px;">14:45</div>
<div class="t" style="left:677.27px;top:1505.40px;font-size:19.6px;line-height:19.6px;color:#ccccdc;-webkit-text-stroke:0.3px #ccccdc;letter-spacing:-0.619px;">15:00</div>
<div class="t" style="left:763.63px;top:1505.40px;font-size:19.6px;line-height:19.6px;color:#ccccdc;-webkit-text-stroke:0.3px #ccccdc;letter-spacing:-0.619px;">15:15</div>
<div class="t" style="left:849.99px;top:1505.40px;font-size:19.6px;line-height:19.6px;color:#ccccdc;-webkit-text-stroke:0.3px #ccccdc;letter-spacing:-0.619px;">15:30</div>
<div class="t" style="left:936.35px;top:1505.40px;font-size:19.6px;line-height:19.6px;color:#ccccdc;-webkit-text-stroke:0.3px #ccccdc;letter-spacing:-0.619px;">15:45</div>
<div class="t" style="left:1022.71px;top:1505.40px;font-size:19.6px;line-height:19.6px;color:#ccccdc;-webkit-text-stroke:0.3px #ccccdc;letter-spacing:-0.619px;">16:00</div>
<div class="t" style="left:27.40px;top:1234.40px;font-size:19.6px;line-height:19.6px;color:#ccccdc;-webkit-text-stroke:0.3px #ccccdc;letter-spacing:0.350px;">150</div>
<div class="t" style="left:27.30px;top:1317.20px;font-size:19.6px;line-height:19.6px;color:#ccccdc;-webkit-text-stroke:0.3px #ccccdc;letter-spacing:0.400px;">100</div>
<div class="t" style="left:37.05px;top:1399.30px;font-size:19.6px;line-height:19.6px;color:#ccccdc;-webkit-text-stroke:0.3px #ccccdc;letter-spacing:1.925px;">50</div>
<div class="t" style="left:49.98px;top:1482.40px;font-size:19.6px;line-height:19.6px;color:#ccccdc;-webkit-text-stroke:0.3px #ccccdc;">0</div>
<div class="t" style="left:63.12px;top:1538.90px;font-size:19.6px;line-height:19.6px;color:#ccccdc;-webkit-text-stroke:0.3px #ccccdc;letter-spacing:0.365px;">OPEN: default_pool</div>
<div class="t" style="left:293.32px;top:1538.90px;font-size:19.6px;line-height:19.6px;color:#ccccdc;-webkit-text-stroke:0.3px #ccccdc;letter-spacing:0.354px;">QUEUED: default_pool</div>
<div class="t" style="left:550.47px;top:1538.90px;font-size:19.6px;line-height:19.6px;color:#ccccdc;-webkit-text-stroke:0.3px #ccccdc;letter-spacing:0.502px;">RUNNING: default_pool</div>
<div class="t" style="left:819.72px;top:1538.90px;font-size:19.6px;line-height:19.6px;color:#ccccdc;-webkit-text-stroke:0.3px #ccccdc;letter-spacing:0.368px;">STARVING: default_pool</div>
<div class="t" style="left:2298.83px;top:811.30px;font-size:23.0px;line-height:23.0px;color:#ccccdc;-webkit-text-stroke:0.3px #ccccdc;letter-spacing:-0.113px;">OPEN: default_pool</div>
<div class="t" style="left:3314.60px;top:836.40px;font-size:43.0px;line-height:43.0px;color:#85bd72;-webkit-text-stroke:0.3px #85bd72;letter-spacing:-2.662px;">128</div>
<div class="t" style="left:2298.83px;top:898.50px;font-size:23.0px;line-height:23.0px;color:#ccccdc;-webkit-text-stroke:0.3px #ccccdc;letter-spacing:-0.236px;">QUEUED: default_pool</div>
<div class="t" style="left:3356.90px;top:923.30px;font-size:43.0px;line-height:43.0px;color:#85bd72;-webkit-text-stroke:0.3px #85bd72;">0</div>
<div class="t" style="left:2298.08px;top:985.40px;font-size:23.0px;line-height:23.0px;color:#ccccdc;-webkit-text-stroke:0.3px #ccccdc;letter-spacing:-0.096px;">RUNNING: default_pool</div>
<div class="t" style="left:3356.90px;top:1010.20px;font-size:43.0px;line-height:43.0px;color:#85bd72;-webkit-text-stroke:0.3px #85bd72;">0</div>
<div class="t" style="left:2298.95px;top:1072.30px;font-size:23.0px;line-height:23.0px;color:#ccccdc;-webkit-text-stroke:0.3px #ccccdc;letter-spacing:-0.177px;">STARVING: default_pool</div>
<div class="t" style="left:3356.90px;top:1097.10px;font-size:43.0px;line-height:43.0px;color:#85bd72;-webkit-text-stroke:0.3px #85bd72;">0</div>
</div>
</body></html>
